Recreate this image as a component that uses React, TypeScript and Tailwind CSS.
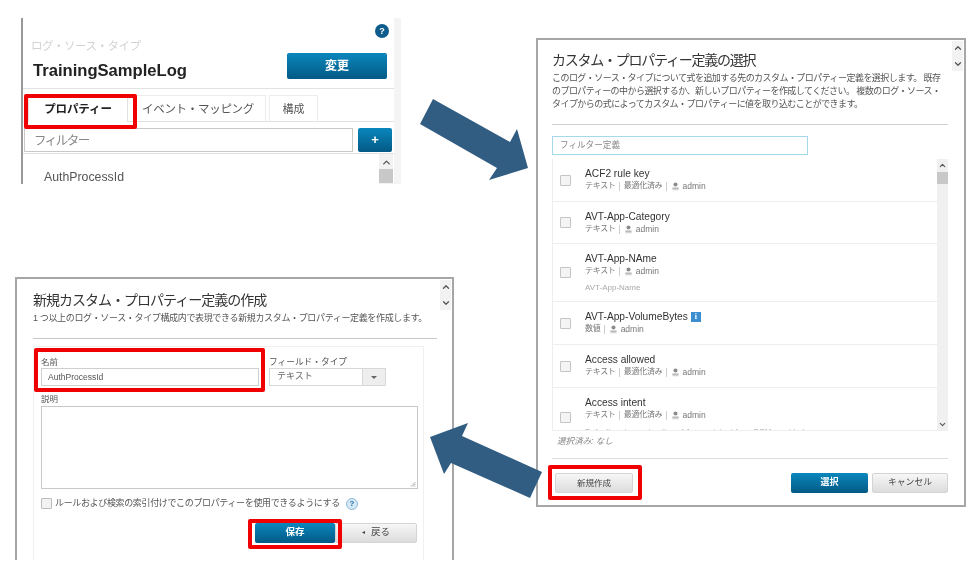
import { ChevronDown, ChevronUp } from "lucide-react"

const font = "font-['Liberation_Sans','Noto_Sans_CJK_JP',sans-serif]"
const blueBtn = "bg-gradient-to-b from-[#0a87bd] to-[#045a85] text-white rounded-[2px] flex items-center justify-center"
const grayBtn = "bg-gradient-to-b from-[#f7f7f7] to-[#dcdcdc] border border-[#d4d4d4] rounded-[2px] text-[#444] flex items-center justify-center"

function Person() {
  return (
    <svg width="7" height="11" viewBox="0 0 9 11" className="ml-[1px] mr-[3px]">
      <circle cx="4.5" cy="3" r="2.6" fill="#8c8c8c" />
      <rect x="0.5" y="7" width="8" height="1.2" fill="#8c8c8c" />
      <rect x="0.5" y="9.2" width="8" height="1" fill="#bbb" />
    </svg>
  )
}

function RedBox({ className }: { className: string }) {
  return <div className={"absolute border-[4px] border-[#f00000] rounded-[2px] " + className} />
}

function ScrollPair() {
  return (
    <div className="absolute right-[1px] top-[1px] w-[11px] h-[30px] bg-[#f2f2f2] flex flex-col items-center justify-between py-[2px] text-[#555]">
      <ChevronUp size={10} strokeWidth={3} />
      <ChevronDown size={10} strokeWidth={3} />
    </div>
  )
}

type Prop = { name: string; meta: string[]; h: string; note?: string; info?: boolean; boxTop: string }

const props: Prop[] = [
  { name: "ACF2 rule key", meta: ["テキスト", "最適化済み"], h: "h-[43px]", boxTop: "mt-[16px]" },
  { name: "AVT-App-Category", meta: ["テキスト"], h: "h-[42px]", boxTop: "mt-[15px]" },
  { name: "AVT-App-NAme", meta: ["テキスト"], h: "h-[58px]", note: "AVT-App-Name", boxTop: "mt-[23px]" },
  { name: "AVT-App-VolumeBytes", meta: ["数値"], h: "h-[43px]", info: true, boxTop: "mt-[16px]" },
  { name: "Access allowed", meta: ["テキスト", "最適化済み"], h: "h-[43px]", boxTop: "mt-[16px]" },
  { name: "Access intent", meta: ["テキスト", "最適化済み"], h: "h-[43px]", note: "Default system extraction of Access intent from DSM provided", boxTop: "mt-[24px]" },
]

function PropRow({ p }: { p: Prop }) {
  return (
    <div className={"flex border-b border-[#eeeeee] overflow-hidden shrink-0 " + p.h}>
      <div className={"w-[9px] h-[9px] ml-[7px] border border-[#c4c4c4] bg-[#f4f4f4] rounded-[1px] shrink-0 box-content " + p.boxTop} />
      <div className="ml-[14px] pt-[8px]">
        <div className="flex items-center text-[10.2px] leading-[13px] text-[#333]">
          {p.name}
          {p.info && (
            <span className="ml-[3px] w-[10px] h-[10px] bg-[#3b8fd0] text-white text-[8px] leading-[10px] text-center font-bold font-['Liberation_Serif',serif]">i</span>
          )}
        </div>
        <div className="flex items-center text-[8.5px] leading-[12px] text-[#777] whitespace-nowrap">
          {p.meta.map((m, i) => (
            <span key={i} className="flex items-center">
              <span className="text-[8px] tracking-[-0.3px]">{m}</span>
              <span className="mx-[3px] text-[#bbb]">|</span>
            </span>
          ))}
          <Person />
          <span className="ml-[1px]">admin</span>
        </div>
        {p.note && <div className="mt-[5px] text-[8px] leading-[12px] text-[#aaa] whitespace-nowrap">{p.note}</div>}
      </div>
    </div>
  )
}

function LogTypePanel() {
  return (
    <div className="absolute left-[21px] top-[18px] w-[380px] h-[166px] border-l-[2px] border-l-[#999] border-r-[7px] border-r-[#f4f4f4] overflow-hidden">
      <div className="flex justify-end pt-[6px] pr-[5px]">
        <div className="w-[14px] h-[14px] rounded-full bg-[#0f5c8c] text-white text-[9px] font-bold leading-[14px] text-center">?</div>
      </div>
      <div className="flex justify-between h-[51px] border-b border-[#e2e2e2]">
        <div className="pl-[8px]">
          <div className="mt-[1px] text-[11.5px] leading-[14px] tracking-[-0.5px] text-[#d2d2d2]">ログ・ソース・タイプ</div>
          <div className="ml-[2px] mt-[8px] text-[16.6px] leading-[20px] font-bold text-[#222]">TrainingSampleLog</div>
        </div>
        <div className={blueBtn + " mt-[15px] mr-[7px] w-[100px] h-[26px] text-[12px] font-bold"}>変更</div>
      </div>
      <div className="flex items-end gap-[3px] h-[33px] pl-[5px] border-b border-[#e2e2e2]">
        <div className="w-[100px] h-[27px] -mb-px pt-[2px] bg-white border border-b-0 border-[#e2e2e2] flex items-center justify-center text-[11.5px] tracking-[-0.1px] font-bold text-[#222]">プロパティー</div>
        <div className="ml-[3px] w-[132px] h-[26px] pt-[2px] pr-[4px] border border-b-0 border-[#ececec] flex items-center justify-center text-[11.5px] tracking-[-0.3px] text-[#555]">イベント・マッピング</div>
        <div className="w-[49px] h-[26px] pt-[2px] border border-b-0 border-[#ececec] flex items-center justify-center text-[11px] text-[#555]">構成</div>
      </div>
      <div className="flex gap-[5px] pt-[6px] pb-[1px] pl-[1px] border-b border-[#e2e2e2]">
        <div className="w-[329px] h-[24px] pt-[2px] border border-[#c8c8c8] flex items-center pl-[9px] text-[12.5px] tracking-[-1.5px] text-[#888]">フィルター</div>
        <div className={blueBtn + " w-[34px] h-[24px] text-[13px] font-bold"}>+</div>
      </div>
      <div className="flex justify-between h-[30px]">
        <div className="pl-[21px] pt-[16px] text-[12.3px] leading-[14px] text-[#555]">AuthProcessId</div>
        <div className="w-[14px] mr-[1px] bg-[#f2f2f2] flex flex-col items-center text-[#555]">
          <ChevronUp size={11} strokeWidth={3} className="mt-[3px]" />
          <div className="w-full h-[14px] mt-[1px] bg-[#c8c8c8]" />
        </div>
      </div>
    </div>
  )
}

function SelectPanel() {
  return (
    <div className="absolute left-[536px] top-[38px] w-[430px] h-[469px] border-[2px] border-[#a6a6a6] bg-white pl-[14px] pr-[16px] pt-[11px]">
      <ScrollPair />
      <div className="text-[14px] leading-[18px] tracking-[-1.25px] text-[#333]">カスタム・プロパティー定義の選択</div>
      <div className="mt-[3px] text-[9px] leading-[13px] tracking-[-0.55px] text-[#555] whitespace-nowrap">
        <div>このログ・ソース・タイプについて式を追加する先のカスタム・プロパティー定義を選択します。 既存</div>
        <div>のプロパティーの中から選択するか、新しいプロパティーを作成してください。 複数のログ・ソース・</div>
        <div>タイプからの式によってカスタム・プロパティーに値を取り込むことができます。</div>
      </div>
      <div className="mt-[13px] border-t border-[#d0d0d0]" />
      <div className="mt-[11px] w-[256px] h-[19px] border-[1.5px] border-[#a5d8ea] flex items-center pl-[7px] text-[8.6px] text-[#888]">フィルター定義</div>
      <div className="relative mt-[4px] h-[272px] border-l border-[#eeeeee] pr-[11px] overflow-hidden">
        <div className="flex flex-col h-full overflow-hidden">
          {props.map((p) => (
            <PropRow key={p.name} p={p} />
          ))}
        </div>
        <div className="absolute right-0 top-0 bottom-0 w-[11px] bg-[#f0f0f0] flex flex-col items-center justify-between text-[#555] py-[2px]">
          <div className="flex flex-col items-center w-full">
            <ChevronUp size={9} strokeWidth={3} />
            <div className="w-full h-[12px] mt-[2px] bg-[#c8c8c8]" />
          </div>
          <ChevronDown size={9} strokeWidth={3} />
        </div>
      </div>
      <div className="mt-[4px] pl-[5px] text-[8.5px] leading-[12px] italic text-[#888]">選択済み: なし</div>
      <div className="mt-[11px] border-t border-[#dddddd]" />
      <div className="flex justify-between mt-[14px] pl-[3px]">
        <div className={grayBtn + " w-[78px] h-[20px] text-[8.5px]"}>新規作成</div>
        <div className="flex gap-[4px]">
          <div className={blueBtn + " w-[77px] h-[20px] text-[9px] font-bold"}>選択</div>
          <div className={grayBtn + " w-[76px] h-[20px] text-[8.8px]"}>キャンセル</div>
        </div>
      </div>
    </div>
  )
}

function CreatePanel() {
  return (
    <div className="absolute left-[15px] top-[277px] w-[439px] h-[283px] border-[2px] border-b-0 border-[#a6a6a6] bg-white pl-[16px] pr-[15px] pt-[12px] overflow-hidden">
      <ScrollPair />
      <div className="text-[14px] leading-[18px] tracking-[-1px] text-[#333]">新規カスタム・プロパティー定義の作成</div>
      <div className="mt-[2px] text-[9px] leading-[14px] tracking-[-0.35px] text-[#555] whitespace-nowrap">1 つ以上のログ・ソース・タイプ構成内で表現できる新規カスタム・プロパティー定義を作成します。</div>
      <div className="mt-[13px] border-t border-[#c8c8c8]" />
      <div className="mt-[7px] w-[391px] h-[230px] border border-[#f0f0f0] pl-[7px] pr-[5px] pt-[10px]">
        <div className="flex gap-[10px]">
          <div>
            <div className="text-[8.5px] leading-[11px] text-[#555]">名前</div>
            <div className="w-[218px] h-[18px] border border-[#d0d0d0] flex items-center pl-[6px] text-[8.5px] text-[#555]">AuthProcessId</div>
          </div>
          <div>
            <div className="text-[8.7px] leading-[11px] text-[#555]">フィールド・タイプ</div>
            <div className="w-[117px] h-[18px] border border-[#d8d8d8] flex text-[9px] text-[#666]">
              <div className="flex-1 flex items-center pl-[7px]">テキスト</div>
              <div className="w-[23px] bg-[#eeeeee] border-l border-[#d8d8d8] flex items-center justify-center">
                <div className="w-0 h-0 border-x-[3px] border-x-transparent border-t-[3px] border-t-[#666]" />
              </div>
            </div>
          </div>
        </div>
        <div className="mt-[8px] text-[8.5px] leading-[11px] text-[#555]">説明</div>
        <div className="relative mt-[1px] w-[377px] h-[83px] border border-[#c8c8c8]">
          <svg width="6" height="6" viewBox="0 0 6 6" className="absolute right-[1px] bottom-[1px]">
            <path d="M1 5.5L5.5 1M3 5.5L5.5 3M5 5.5L5.5 5" stroke="#999" strokeWidth="0.8" fill="none" />
          </svg>
        </div>
        <div className="flex items-center mt-[8px] text-[9px] tracking-[-0.35px] text-[#555]">
          <div className="w-[9px] h-[9px] border border-[#bbb] bg-[#f2f2f2] rounded-[1px] box-content" />
          <span className="ml-[3px] whitespace-nowrap">ルールおよび検索の索引付けでこのプロパティーを使用できるようにする</span>
          <div className="ml-[6px] w-[12px] h-[12px] rounded-full bg-[#d6e8f5] border border-[#8dbbdb] text-[#1d6ea8] text-[8px] font-bold leading-[10px] text-center">?</div>
        </div>
        <div className="flex justify-end mt-[12px] pr-[1px]">
          <div className={blueBtn + " w-[80px] h-[20px] text-[9.5px] font-bold"}>保存</div>
          <div className={grayBtn + " w-[82px] h-[20px] text-[9.5px]"}>
            <span className="text-[6px] mr-[6px]">◂</span>戻る
          </div>
        </div>
      </div>
    </div>
  )
}

export default function App() {
  return (
    <div className={"relative w-[977px] h-[566px] bg-white overflow-hidden blur-[0.35px] " + font}>
      <LogTypePanel />
      <SelectPanel />
      <CreatePanel />
      <svg width="977" height="566" className="absolute inset-0 pointer-events-none">
        <polygon points="433,99 510,142 517,129 528,168 489,180 497,168 420,124" fill="#325d82" />
        <polygon points="430,437 468,423 462,436 542,472 530,498 451,463 444,474" fill="#325d82" />
      </svg>
      <RedBox className="left-[24px] top-[94px] w-[113px] h-[35px]" />
      <RedBox className="left-[548px] top-[465px] w-[94px] h-[35px]" />
      <RedBox className="left-[34px] top-[348px] w-[231px] h-[44px]" />
      <RedBox className="left-[248px] top-[519px] w-[94px] h-[30px]" />
    </div>
  )
}
